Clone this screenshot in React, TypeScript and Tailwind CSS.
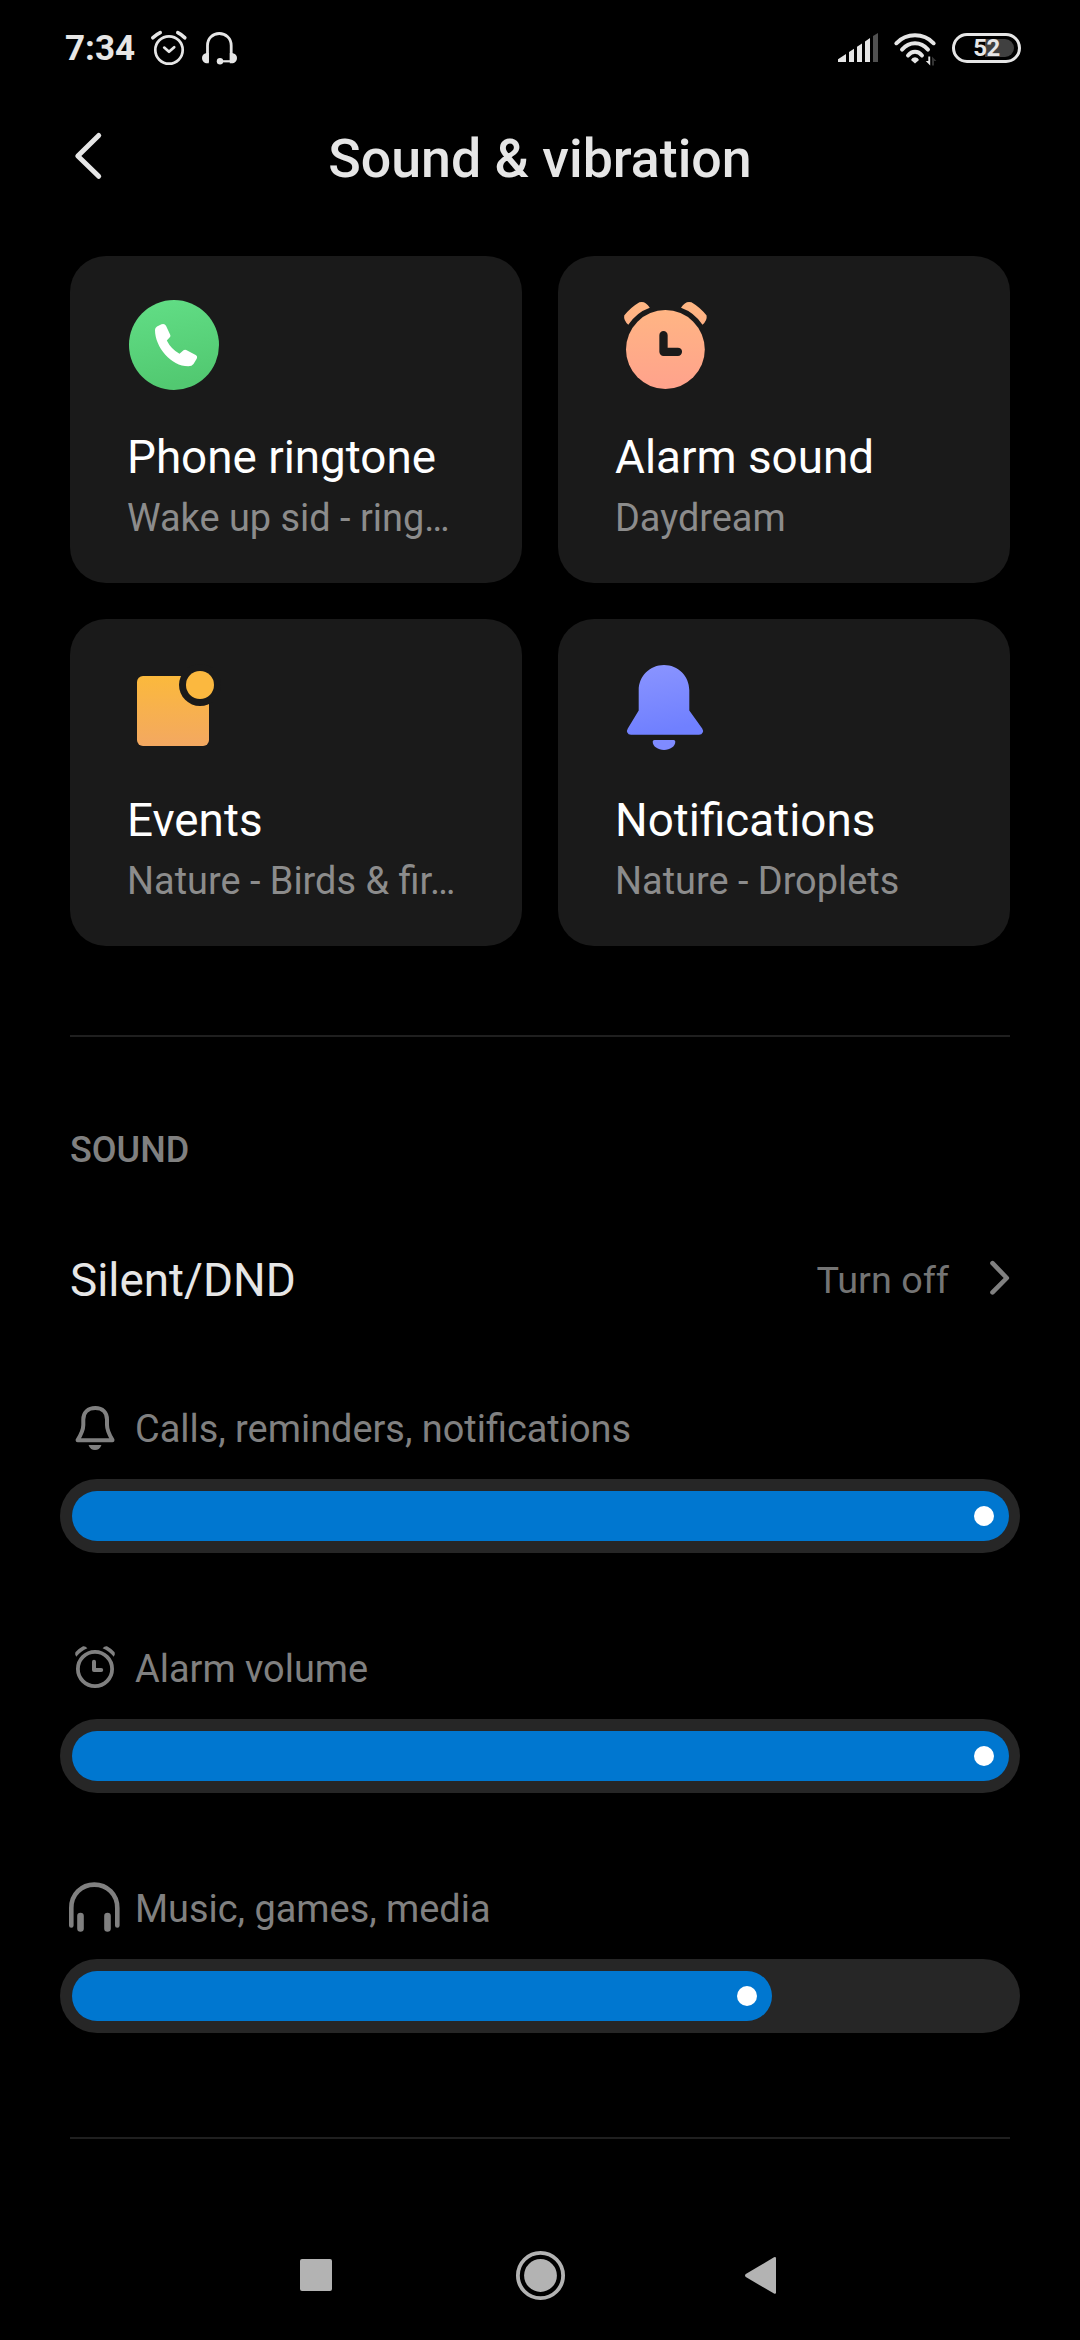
import { ReactNode } from "react";

type Sound = {
  title: string;
  value: string;
  icon: ReactNode;
};

type Volume = {
  label: string;
  width: number;
  icon: ReactNode;
};

const PhoneIcon = () => (
  <svg width="96" height="96" viewBox="0 0 96 96">
    <defs>
      <linearGradient id="phone" x1="0" y1="0" x2="0.2" y2="1">
        <stop offset="0" stopColor="#62de86" />
        <stop offset="1" stopColor="#52c971" />
      </linearGradient>
    </defs>
    <circle cx="47" cy="48" r="45" fill="url(#phone)" />
    <path
      d="M28 33Q28 30.5 30 29.5L34.5 27.3Q37.5 26 39 28.8L43.3 38Q43.8 39.3 42.8 40.3L39.8 43.5Q44 52 52.5 56.8L56.5 53.3Q57.8 52.3 59.2 53L68.7 58Q70.8 59.3 69.7 61.8L66.5 67Q65 69.3 61.3 69.3C44 69.3 28 50 28 33Z"
      fill="#fff"
    />
  </svg>
);

const AlarmIcon = () => (
  <svg width="96" height="96" viewBox="0 0 96 96">
    <defs>
      <linearGradient
        id="alarm"
        x1="0"
        y1="5"
        x2="0"
        y2="92"
        gradientUnits="userSpaceOnUse"
      >
        <stop offset="0" stopColor="#ffb783" />
        <stop offset="1" stopColor="#ffa28c" />
      </linearGradient>
    </defs>
    <g fill="url(#alarm)">
      <circle cx="50.4" cy="52.5" r="39.4" />
      <path d="M13.3 27.8Q8.4 23.5 9.2 18.6Q15.5 10.5 24.4 5.3Q30.2 3.4 34.8 10.8Q21.5 15.5 13.3 27.8Z" />
      <path d="M87.5 27.8Q92.4 23.5 91.6 18.6Q85.3 10.5 76.4 5.3Q70.6 3.4 66 10.8Q79.3 15.5 87.5 27.8Z" />
    </g>
    <path
      d="M48.5 38.2V54.8H62.9"
      fill="none"
      stroke="#1a1a1a"
      strokeWidth="8.3"
      strokeLinecap="round"
      strokeLinejoin="round"
    />
  </svg>
);

const EventsIcon = () => (
  <svg width="96" height="96" viewBox="0 0 96 96">
    <defs>
      <linearGradient id="events" x1="0" y1="0" x2="0" y2="1">
        <stop offset="0" stopColor="#fbb93c" />
        <stop offset="1" stopColor="#f3a861" />
      </linearGradient>
    </defs>
    <rect x="10" y="16" width="72" height="70" rx="6" fill="url(#events)" />
    <circle cx="73" cy="25" r="21" fill="#1a1a1a" />
    <circle cx="73" cy="25" r="14" fill="#fbb83f" />
  </svg>
);

const BellIcon = () => (
  <svg width="96" height="96" viewBox="0 0 96 96">
    <defs>
      <linearGradient id="bell" x1="0" y1="0" x2="0.2" y2="1">
        <stop offset="0" stopColor="#8b95ff" />
        <stop offset="1" stopColor="#7080ff" />
      </linearGradient>
    </defs>
    <path
      d="M23.7 30.3C23.7 16 35 5 49 5S74.3 16 74.3 30.3V50.5L87.2 68.5Q88.6 70.7 87.7 72.4Q86.8 74.7 84 74.7H16Q13.2 74.7 12.3 72.4Q11.5 70.7 12.8 68.5L23.7 50.5Z"
      fill="url(#bell)"
    />
    <path
      d="M39.5 80H58.7Q60.3 80 60.3 81.8C60.3 86.5 55 90 49 90S37.7 86.5 37.7 81.8Q37.7 80 39.5 80Z"
      fill="#7f8bff"
    />
  </svg>
);

const sounds: Sound[] = [
  { title: "Phone ringtone", value: "Wake up sid - ring…", icon: <PhoneIcon /> },
  { title: "Alarm sound", value: "Daydream", icon: <AlarmIcon /> },
  { title: "Events", value: "Nature - Birds & fir…", icon: <EventsIcon /> },
  { title: "Notifications", value: "Nature - Droplets", icon: <BellIcon /> },
];

const volumes: Volume[] = [
  {
    label: "Calls, reminders, notifications",
    width: 937,
    icon: (
      <svg width="50" height="54" viewBox="0 0 50 54" fill="none">
        <path
          d="M13.3 17.5C13.3 10.5 18 6 25.3 6S37 10.5 37 17.5V23C37 29 39.5 33 42.5 38V38.2H7.6V38C10.8 33 13.3 29 13.3 23Z"
          stroke="#808080"
          strokeWidth="4"
          strokeLinejoin="round"
        />
        <path
          d="M19 43H31Q31.5 43 31.2 43.8Q29.5 48 25 48T18.8 43.8Q18.5 43 19 43Z"
          fill="#808080"
        />
      </svg>
    ),
  },
  {
    label: "Alarm volume",
    width: 937,
    icon: (
      <svg width="50" height="54" viewBox="0 0 50 54" fill="none">
        <circle cx="25" cy="27" r="17.1" stroke="#808080" strokeWidth="3.8" />
        <path
          d="M24 19.8V28H31.2"
          stroke="#808080"
          strokeWidth="4"
          strokeLinecap="round"
          strokeLinejoin="round"
        />
        <path
          d="M6.2 14.8Q4.5 12 5.4 10.3Q8.5 6.5 13 4.2Q15.5 3.8 17.4 6.2Q11 8.8 6.2 14.8ZM43.8 14.8Q45.5 12 44.6 10.3Q41.5 6.5 37 4.2Q34.5 3.8 32.6 6.2Q39 8.8 43.8 14.8Z"
          fill="#808080"
        />
      </svg>
    ),
  },
  {
    label: "Music, games, media",
    width: 700,
    icon: (
      <svg className="overflow-visible" width="50" height="54" viewBox="0 0 50 54" fill="none">
        <path
          d="M1.3 43.5V26C1.3 12.5 11.5 2.6 24.3 2.6S47.3 12.5 47.3 26V43.5"
          stroke="#808080"
          strokeWidth="4.6"
          strokeLinecap="round"
        />
        <path
          d="M10.5 34V46.5M37.5 34V46.5"
          stroke="#808080"
          strokeWidth="6.6"
          strokeLinecap="round"
        />
      </svg>
    ),
  },
];

const StatusBar = () => (
  <div className="flex h-24 items-center justify-between pl-[65px] pr-[59px] text-[#e6e6e6]">
    <div className="flex items-center">
      <div className="w-[83px] text-[35px] font-bold leading-none">7:34</div>
      <svg width="42" height="42" viewBox="0 0 42 42" fill="none">
        <g stroke="#e6e6e6" strokeLinecap="round" strokeLinejoin="round">
          <circle cx="21" cy="23" r="13.7" strokeWidth="2.7" />
          <path d="M16.2 20.6L21 24.8L26.2 20.2" strokeWidth="2.7" />
        </g>
        <path
          d="M4.8 10.8Q8 7.6 12.2 5.6M29.8 5.6Q34 7.6 36.8 10.8"
          stroke="#e6e6e6"
          strokeWidth="3.6"
          strokeLinecap="round"
        />
      </svg>
      <svg className="ml-2" width="42" height="42" viewBox="0 0 42 42" fill="none">
        <path
          d="M9.5 35V18.5C9.5 11 15 6.5 21.3 6.5S33.2 11 33.2 18.5V35"
          stroke="#e6e6e6"
          strokeWidth="2.8"
        />
        <path
          d="M10.8 26H8.5Q4 27 4 31T8 36.3H10.8ZM31.8 26H34.2Q39 27 39 31T35 36.3H31.8Z"
          fill="#e6e6e6"
        />
        <path d="M22 34.3H34" stroke="#e6e6e6" strokeWidth="2.2" />
        <circle cx="22" cy="34.2" r="3.2" fill="#e6e6e6" />
      </svg>
    </div>
    <div className="flex items-center">
      <svg width="42" height="32" viewBox="0 0 42 32">
        <path
          d="M0 30V27.3L8 22V30ZM11 30V20L16 16.7V30ZM19 30V14.7L24 11.4V30ZM27 30V9.4L32 6.1V30Z"
          fill="#e6e6e6"
        />
        <path d="M35 30V4.1L40 1V30Z" fill="#505050" />
      </svg>
      <svg className="ml-3" width="46" height="36" viewBox="0 0 46 36" fill="none">
        <g stroke="#e6e6e6" strokeWidth="3.9" strokeLinecap="round">
          <path d="M4.3 13.3Q12 5.3 23 5.3T41.7 13.3" />
          <path d="M10 19.6Q15.5 13.3 23 13.3T36 19.6" />
          <path d="M16 25.4Q19 21.7 23 21.7T30 25.4" />
        </g>
        <path d="M23 27.3Q26 27.3 27 30L23 33.6L19 30Q20 27.3 23 27.3Z" fill="#e6e6e6" />
        <path d="M36.3 26.5H38.2V35.5L33.8 31H36.3Z" fill="#e6e6e6" />
        <path d="M42 35.5H40V26.5L44.4 31H42Z" fill="#333" />
      </svg>
      <div className="relative ml-[14px] flex h-[30px] w-[69px] items-center justify-center rounded-full border-[3px] border-[#e6e6e6]">
        <div className="absolute right-1 top-[3px] h-[18px] w-[29px] rounded-r-full bg-[#404040]" />
        <div className="relative text-[24px] font-bold leading-none tracking-[-0.5px]">
          52
        </div>
      </div>
    </div>
  </div>
);

const SoundCard = ({ sound }: { sound: Sound }) => {
  return (
    <div className="h-[327px] rounded-[36px] bg-[#1a1a1a] pl-[57px] pt-[41px]">
      {sound.icon}
      <div className="mt-[35px] text-[45.8px] leading-[60px] text-white">
        {sound.title}
      </div>
      <div className="mt-[5px] whitespace-nowrap text-[37.9px] leading-[50px] text-[#8c8c8c]">
        {sound.value}
      </div>
    </div>
  );
};

const VolumeSlider = ({ volume }: { volume: Volume }) => {
  return (
    <div className="h-60">
      <div className="flex h-[54px] items-center gap-[15px] pl-[10px]">
        {volume.icon}
        <div className="text-[37.9px] leading-[54px] text-[#808080]">
          {volume.label}
        </div>
      </div>
      <div className="mt-[23px] h-[74px] rounded-full bg-[#262626] p-3">
        <div
          className="flex h-[50px] items-center justify-end rounded-full bg-[#0077d0] pr-[15px]"
          style={{ width: volume.width }}
        >
          <div className="h-5 w-5 rounded-full bg-white" />
        </div>
      </div>
    </div>
  );
};

const NavBar = () => (
  <div className="flex h-[130px] items-center justify-center gap-[160px]">
    <svg width="64" height="64" viewBox="0 0 64 64">
      <rect x="16" y="16" width="32" height="32" rx="2" fill="#b3b3b3" />
    </svg>
    <svg width="64" height="64" viewBox="0 0 64 64">
      <circle cx="32.5" cy="32.5" r="22.6" fill="none" stroke="#b3b3b3" strokeWidth="3.8" />
      <circle cx="32.5" cy="32.5" r="16.4" fill="#b3b3b3" />
    </svg>
    <svg width="64" height="64" viewBox="0 0 64 64">
      <path
        d="M13.8 31L42 14.3Q44 13.6 44 15.5V49.5Q44 51.3 42 50.6L13.8 34Q12.2 32.5 13.8 31Z"
        fill="#b3b3b3"
      />
    </svg>
  </div>
);

const App = () => {
  return (
    <div className="flex h-[2340px] w-[1080px] flex-col overflow-hidden bg-black font-['Roboto',sans-serif]">
      <StatusBar />
      <div className="grid h-[126px] grid-cols-[1fr_auto_1fr] items-center px-[60px]">
        <svg width="60" height="60" viewBox="0 0 60 60" fill="none">
          <path
            d="M38.7 6.5L17.8 27L38.7 47.3"
            stroke="#e6e6e6"
            strokeWidth="5"
            strokeLinecap="round"
            strokeLinejoin="round"
          />
        </svg>
        <div className="text-[53.7px] font-medium leading-[70px] text-[#e6e6e6]">
          Sound &amp; vibration
        </div>
      </div>

      <div className="mx-[70px] mt-[34px] grid grid-cols-2 gap-9">
        {sounds.map((sound) => (
          <SoundCard key={sound.title} sound={sound} />
        ))}
      </div>

      <div className="mx-[70px] mt-[89px] h-[2px] bg-[#1f1f1f]" />

      <div className="mx-[70px] mt-[89px] text-[36px] font-medium leading-[48px] text-[#808080]">
        SOUND
      </div>

      <div className="mx-[70px] mt-[76px] flex h-[60px] items-center">
        <div className="flex-1 pt-[2px] text-[45.8px] leading-[60px] text-[#e6e6e6]">
          Silent/DND
        </div>
        <div className="text-[37.8px] leading-[60px] text-[#747474]">Turn off</div>
        <svg className="ml-[35px]" width="26" height="60" viewBox="0 0 26 60" fill="none">
          <path
            d="M8.5 13.2L22.8 28L8.5 42.4"
            stroke="#808080"
            strokeWidth="4.6"
            strokeLinecap="round"
            strokeLinejoin="round"
          />
        </svg>
      </div>

      <div className="mx-[60px] mt-[92px]">
        {volumes.map((volume) => (
          <VolumeSlider key={volume.label} volume={volume} />
        ))}
      </div>

      <div className="mx-[70px] mt-[15px] h-[2px] shrink-0 bg-[#1f1f1f]" />
      <div className="mt-auto">
        <NavBar />
      </div>
    </div>
  );
};

export default App;
